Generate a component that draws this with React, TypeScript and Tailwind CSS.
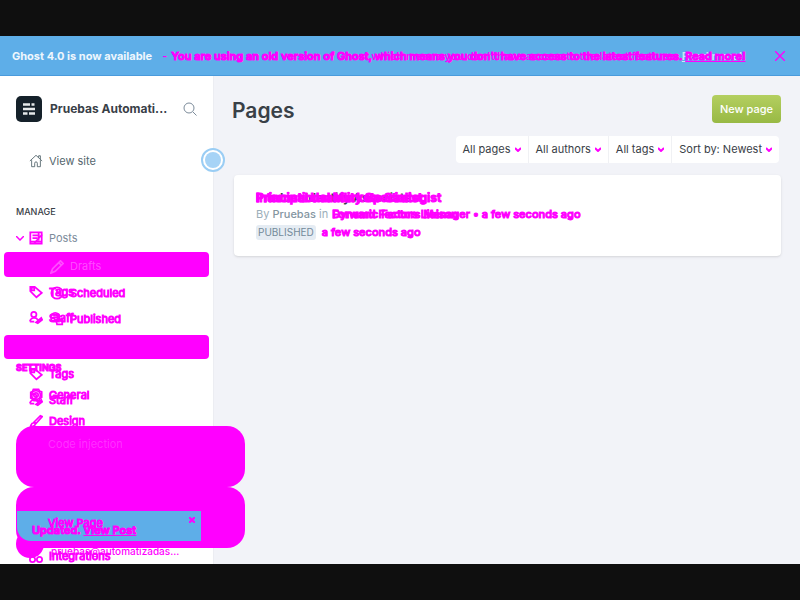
import React from "react";

const ghost = "text-[#ff00ff]";

function Icon({ kind }: { kind: string }) {
  const shapes: Record<string, React.ReactNode> = {
    home: <path d="M1 8 8 1.5 15 8M3 7v7.5h3.5v-4a1.5 1.5 0 0 1 3 0v4H13V7M11 4V2h2v4" />,
    posts: <><path d="M1.5 1.5h13v13h-13zM4 5h8M4 8h6M1 12h13" /><path d="m6 14 9-10M11 2v9" /></>,
    tag: <><path d="M1.5 2v5l7 7 6-5-8-7z" /><path d="M3 3h3v3H3z" /></>,
    staff: <><circle cx="5.5" cy="4" r="3" /><path d="M1 12c1-5 7-5 9-2M8 13l6-5 1 2-5 4zM1 12h5" /></>,
    general: <><circle cx="8" cy="8" r="2.5" /><path d="M5 1.5h6l1 2 2.5 1v6l-2 1.5-1 2.5h-6l-1.5-2-2-1V5l2-1z" /><circle cx="8" cy="8" r="5" /></>,
    design: <path d="m5 10 8-8 2 1-8 9M5 10c-3 0-2 4-4 4 4 1 7-1 6-4z" />,
    clock: <><circle cx="8" cy="8" r="6.5" /><path d="M8 4v4h3" /></>,
    published: <><circle cx="6" cy="6" r="5" /><path d="M1 3h9v7H2M7 9h7v5H8zM3 6h8" /></>,
    pen: <path d="m1 15 2-5 9-9 3 3-9 9zM10 3l3 3" />,
    integrations: <><circle cx="8" cy="4" r="3" /><circle cx="4" cy="12" r="3" /><circle cx="12" cy="12" r="3" /></>,
  };
  return (
    <svg viewBox="0 0 16 16" className="size-[14px] shrink-0" fill="none" stroke="currentColor" strokeWidth={kind === "home" ? 1 : 2}>
      {shapes[kind]}
    </svg>
  );
}

function Item({ icon, children, inset = "pl-[29px]", className = "" }: { icon: string; children: React.ReactNode; inset?: string; className?: string }) {
  return (
    <a href="#" className={`flex h-[26px] items-center gap-[6px] text-[11px] ${inset} ${ghost} ${className}`}>
      <Icon kind={icon} />
      <span className="[-webkit-text-stroke:1px]">{children}</span>
    </a>
  );
}

function Filter({ label }: { label: string }) {
  return (
    <button className="flex items-center gap-1 border-r border-[#f0f1f4] px-[7px] whitespace-nowrap last:border-r-0">
      {label}
      <svg viewBox="0 0 6 5" className="h-[5px] w-[6px] text-[#ff00ff]" fill="none" stroke="currentColor" strokeWidth="2">
        <path d="m0 1 3 3 3-3" />
      </svg>
    </button>
  );
}

function Banner() {
  return (
    <header className="flex h-10 shrink-0 items-center justify-between border-b border-[#4a9bdc] bg-[#5eaee8] px-3 pt-px text-[11px] text-white">
      <p className="flex whitespace-nowrap">
        <strong className="font-bold text-white/90">Ghost 4.0 is now available</strong>
        <span className={`ml-[10px] font-semibold ${ghost}`}>-</span>
        <span className={`ml-1 grid font-semibold ${ghost}`}>
          <span className="[grid-area:1/1]">You are using an old version of Ghost which means you don't have access to the latest features. <a href="#" className="text-white/70 underline">Read more!</a></span>
          <span className="[-webkit-text-stroke:1px] [grid-area:1/1]">You are using an old version of Ghost, which means you don't have access to the latest features. <a href="#" className="underline">Read more!</a></span>
        </span>
      </p>
      <button aria-label="Close" className={`mr-[3px] ${ghost}`}>
        <svg viewBox="0 0 10 10" className="size-[10px]" stroke="currentColor" strokeWidth="1.4"><path d="m0 0 10 10M10 0 0 10" /></svg>
      </button>
    </header>
  );
}

function Notices() {
  return (
    <section className="absolute top-[350px] left-4 w-[229px] text-[11px]">
      <div className="h-[61px] rounded-[18px] bg-[#ff00ff] pt-[10px] pl-8 text-white/20">Code injection</div>
      <div className="h-[61px] overflow-hidden rounded-[18px] bg-[#ff00ff] pt-6 pl-px">
        <div className={`grid h-[30px] w-[184px] rounded-bl-[14px] bg-[#5eaee8] ${ghost}`}>
          <a href="#" className="pt-1 pl-[31px] leading-4 [-webkit-text-stroke:1px] [grid-area:1/1]">View Page</a>
          <p className="pt-[11px] pl-[15px] leading-4 font-semibold [-webkit-text-stroke:1px] [grid-area:1/1]">Updated. <a href="#" className="underline">View Post</a></p>
          <button aria-label="Dismiss" className="mt-[6px] mr-[6px] size-[6px] justify-self-end [grid-area:1/1]">
            <svg viewBox="0 0 6 6" stroke="currentColor" strokeWidth="2"><path d="m0 0 6 6M6 0 0 6" /></svg>
          </button>
        </div>
      </div>
    </section>
  );
}

function Sidebar() {
  return (
    <aside className="relative z-10 w-[214px] shrink-0 border-r border-[#ecedf2] bg-white">
      <div className="flex h-[66px] items-center pl-4">
        <span className="flex size-[26px] items-center justify-center rounded-[5px] bg-[#15212a]">
          <svg viewBox="0 0 12 12" className="size-3" stroke="#e5e9ea" strokeWidth="2.4"><path d="M0 1.5h7M8.500 1.5h3M0 6h12M0 10.5h4.500M6 10.5h6" /></svg>
        </span>
        <strong className="ml-2 w-[120px] text-[12px] font-bold whitespace-nowrap text-[#394047]">Pruebas Automati...</strong>
        <button aria-label="Search" className="ml-[13px] text-[#7c8b9a]">
          <svg viewBox="0 0 14 14" className="size-[14px]" fill="none" stroke="currentColor"><circle cx="6" cy="6" r="5" /><path d="m10 10 3.500 3.500" /></svg>
        </button>
      </div>
      <a href="#" className="mt-[6px] flex h-[26px] items-center gap-[6px] pl-[29px] text-[11px] text-[#54666d]"><Icon kind="home" />View site</a>
      <h2 className="mt-[31px] pl-4 text-[9px] leading-[14px] font-medium text-[#394047]">MANAGE</h2>
      <div className="mt-[6px] grid h-[339px] overflow-hidden">
        <nav className="[grid-area:1/1]">
          <a href="#" className="flex h-[26px] items-center pl-4 text-[11px] text-[#7c8b9a]">
            <svg viewBox="0 0 8 5" className={`mr-[5px] h-[5px] w-2 ${ghost}`} fill="none" stroke="currentColor" strokeWidth="1.5"><path d="m0 0 4 4 4-4" /></svg>
            <span className={ghost}><Icon kind="posts" /></span><span className="ml-[6px]">Posts</span>
          </a>
          <a href="#" className="mx-1 mt-px flex h-[25px] items-center gap-[6px] rounded bg-[#ff00ff] pt-1 pl-[46px] text-[11px] text-white/30"><Icon kind="pen" />Drafts</a>
          <Item icon="tag" className="mt-[2px]">Tags</Item>
          <Item icon="staff">Staff</Item>
          <h2 className={`mt-[30px] pl-4 text-[9px] leading-[14px] font-bold [-webkit-text-stroke:1px] ${ghost}`}>SETTINGS</h2>
          <Item icon="general" className="mt-[7px]">General</Item>
          <Item icon="design">Design</Item>
          <Item icon="integrations" className="mt-[109px]">Integrations</Item>
        </nav>
        <nav className="pt-[55px] [grid-area:1/1]">
          <Item icon="clock" inset="pl-[50px]">Scheduled</Item>
          <Item icon="published" inset="pl-[50px]">Published</Item>
          <a href="#" aria-label="Selected pages" className="mx-1 mt-[3px] block h-6 rounded bg-[#ff00ff]" />
          <Item icon="tag" className="mt-[2px]">Tags</Item>
          <Item icon="staff">Staff</Item>
        </nav>
      </div>
      <footer className={`absolute bottom-[6px] left-4 flex items-end gap-[7px] text-[10px] ${ghost}`}>
        <span className="size-7 rounded-full bg-[#ff00ff]" />
        <span className="leading-[14px] font-medium">pruebas@automatizadas...</span>
      </footer>
      <Notices />
      <button aria-label="Sidebar handle" className="absolute top-[72px] right-[-12px] flex size-6 items-center justify-center rounded-full border-2 border-[#9acdf4] bg-white"><span className="size-4 rounded-full bg-[#a6d3f6]" /></button>
    </aside>
  );
}

function PageCard() {
  return (
    <article className="mt-3 ml-[2px] rounded bg-white px-[22px] pt-[15px] pb-4 text-[11px] leading-4 shadow-sm">
      <h2 className={`grid text-[12px] font-bold ${ghost}`}>
        <span className="text-[#394047] [grid-area:1/1]">Product Identity Associate</span>
        <span className="[-webkit-text-stroke:1px] [grid-area:1/1]">Principal Usability Specialist</span>
        <span className="[-webkit-text-stroke:1px] [grid-area:1/1]">International Markets Strategist</span>
      </h2>
      <p className="flex gap-1 whitespace-nowrap text-[#9baeb9]">
        <span>By <span className="font-medium text-[#84959f]">Pruebas</span> in</span>
        <span className={`grid font-medium [-webkit-text-stroke:1px] ${ghost}`}>
          <span className="[grid-area:1/1]">Forward Factors Liaison</span>
          <span className="[grid-area:1/1]">Dynamic Factors Manager • a few seconds ago</span>
        </span>
      </p>
      <p className="mt-[2px] flex items-center gap-[6px]">
        <span className="rounded-[3px] bg-[#e5ecf3] px-[2px] text-[10px] leading-[15px] text-[#738a99]">PUBLISHED</span>
        <span className={`font-medium [-webkit-text-stroke:1px] ${ghost}`}>a few seconds ago</span>
      </p>
    </article>
  );
}

export default function App() {
  return (
    <div className="flex h-screen flex-col overflow-hidden border-y-[36px] border-[#0f0f0f] bg-[#f2f3f8] font-[Inter,sans-serif]">
      <Banner />
      <div className="flex min-h-0 flex-1">
        <Sidebar />
        <main className="min-w-0 flex-1 pt-[19px] pr-[19px] pl-[18px]">
          <div className="flex items-start justify-between">
            <h1 className="text-[21px] leading-8 font-semibold text-[#394047]">Pages</h1>
            <button className="h-7 rounded bg-linear-to-b from-[#b4cf60] to-[#98b944] px-2 text-[11px] font-medium text-white">New page</button>
          </div>
          <div className="mt-[9px] mr-[2px] ml-auto flex h-[27px] w-fit rounded bg-white text-[11px] text-[#394047]">
            <Filter label="All pages" /><Filter label="All authors" /><Filter label="All tags" /><Filter label="Sort by: Newest" />
          </div>
          <PageCard />
        </main>
      </div>
    </div>
  );
}
